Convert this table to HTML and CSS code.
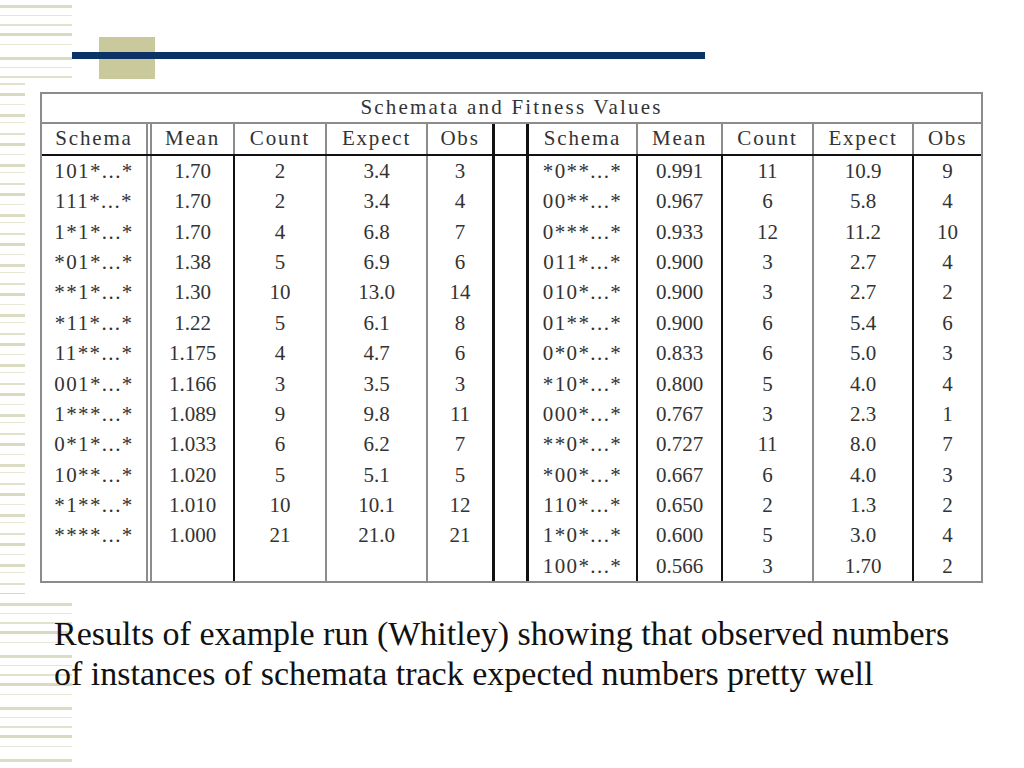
FILE: index.html
```html
<!DOCTYPE html>
<html>
<head>
<meta charset="utf-8">
<link rel="stylesheet" href="styles.css">
</head>
<body>
<div class="deco"></div>
<div class="tbl">
  <div class="title">Schemata and Fitness Values</div>
  <div class="row head">
    <div>Schema</div><div>Mean</div><div>Count</div><div>Expect</div><div>Obs</div><div></div>
    <div>Schema</div><div>Mean</div><div>Count</div><div>Expect</div><div>Obs</div>
  </div>
  <div class="body">
    <div class="row"><div>101*...*</div><div>1.70</div><div>2</div><div>3.4</div><div>3</div><div></div><div>*0**...*</div><div>0.991</div><div>11</div><div>10.9</div><div>9</div></div>
    <div class="row"><div>111*...*</div><div>1.70</div><div>2</div><div>3.4</div><div>4</div><div></div><div>00**...*</div><div>0.967</div><div>6</div><div>5.8</div><div>4</div></div>
    <div class="row"><div>1*1*...*</div><div>1.70</div><div>4</div><div>6.8</div><div>7</div><div></div><div>0***...*</div><div>0.933</div><div>12</div><div>11.2</div><div>10</div></div>
    <div class="row"><div>*01*...*</div><div>1.38</div><div>5</div><div>6.9</div><div>6</div><div></div><div>011*...*</div><div>0.900</div><div>3</div><div>2.7</div><div>4</div></div>
    <div class="row"><div>**1*...*</div><div>1.30</div><div>10</div><div>13.0</div><div>14</div><div></div><div>010*...*</div><div>0.900</div><div>3</div><div>2.7</div><div>2</div></div>
    <div class="row"><div>*11*...*</div><div>1.22</div><div>5</div><div>6.1</div><div>8</div><div></div><div>01**...*</div><div>0.900</div><div>6</div><div>5.4</div><div>6</div></div>
    <div class="row"><div>11**...*</div><div>1.175</div><div>4</div><div>4.7</div><div>6</div><div></div><div>0*0*...*</div><div>0.833</div><div>6</div><div>5.0</div><div>3</div></div>
    <div class="row"><div>001*...*</div><div>1.166</div><div>3</div><div>3.5</div><div>3</div><div></div><div>*10*...*</div><div>0.800</div><div>5</div><div>4.0</div><div>4</div></div>
    <div class="row"><div>1***...*</div><div>1.089</div><div>9</div><div>9.8</div><div>11</div><div></div><div>000*...*</div><div>0.767</div><div>3</div><div>2.3</div><div>1</div></div>
    <div class="row"><div>0*1*...*</div><div>1.033</div><div>6</div><div>6.2</div><div>7</div><div></div><div>**0*...*</div><div>0.727</div><div>11</div><div>8.0</div><div>7</div></div>
    <div class="row"><div>10**...*</div><div>1.020</div><div>5</div><div>5.1</div><div>5</div><div></div><div>*00*...*</div><div>0.667</div><div>6</div><div>4.0</div><div>3</div></div>
    <div class="row"><div>*1**...*</div><div>1.010</div><div>10</div><div>10.1</div><div>12</div><div></div><div>110*...*</div><div>0.650</div><div>2</div><div>1.3</div><div>2</div></div>
    <div class="row"><div>****...*</div><div>1.000</div><div>21</div><div>21.0</div><div>21</div><div></div><div>1*0*...*</div><div>0.600</div><div>5</div><div>3.0</div><div>4</div></div>
    <div class="row"><div></div><div></div><div></div><div></div><div></div><div></div><div>100*...*</div><div>0.566</div><div>3</div><div>1.70</div><div>2</div></div>
  </div>
</div>
<p class="caption">Results of example run (Whitley) showing that observed numbers of instances of schemata track expected numbers pretty well</p>
</body>
</html>
```
FILE: styles.css
```css
html, body {
  margin: 0;
  padding: 0;
  background-color: #fff;
}
body {
  width: 1024px;
  height: 768px;
  overflow: hidden;
  background-image:
    repeating-linear-gradient(to bottom, transparent 0 5px, #dcdcc4 5px 8px, transparent 8px 15px, #e6e6d4 15px 16px, transparent 16px 24px, #e2e2cc 24px 26px, transparent 26px 33px, #dadac0 33px 36px, transparent 36px 44px, #e8e8d8 44px 45px, transparent 45px 52px),
    repeating-linear-gradient(to bottom, transparent 0 3px, #e2e2cc 3px 5px, transparent 5px 13px, #dadac0 13px 16px, transparent 16px 24px, #e8e8d8 24px 25px, transparent 25px 34px, #dcdcc4 34px 37px, transparent 37px 42px, #e6e6d4 42px 43px, transparent 43px 50px),
    repeating-linear-gradient(to bottom, transparent 0 5px, #dcdcc4 5px 8px, transparent 8px 15px, #e6e6d4 15px 16px, transparent 16px 24px, #e2e2cc 24px 26px, transparent 26px 33px, #dadac0 33px 36px, transparent 36px 44px, #e8e8d8 44px 45px, transparent 45px 52px);
  background-repeat: no-repeat;
  background-position: 0 0, 0 80px, 0 598px;
  background-size: 72px 79px, 25px 514px, 72px 170px;
  font-family: "Liberation Serif", "Times New Roman", serif;
}
.deco {
  margin: 37px 0 0 72px;
  width: 633px;
  height: 42px;
  background-image:
    linear-gradient(#0b3366, #0b3366),
    linear-gradient(#c9c99b, #c9c99b);
  background-repeat: no-repeat;
  background-position: 0 15px, 27px 0;
  background-size: 633px 7px, 56px 42px;
}
.tbl {
  margin: 13px 0 0 40px;
  width: 943px;
  box-sizing: border-box;
  border: 2px solid #8c8c8c;
  color: #333;
  font-size: 21px;
}
.title {
  height: 30px;
  box-sizing: border-box;
  border-bottom: 2px solid #8c8c8c;
  text-align: center;
  line-height: 27px;
  letter-spacing: 2.2px;
}
.row {
  display: grid;
  grid-template-columns: 104px 87px 92px 101px 66px 34px 110px 85px 91px 100px 69px;
  height: 30.36px;
  line-height: 30px;
  text-align: center;
}
.row > div {
  box-sizing: border-box;
  white-space: nowrap;
}
.row > :nth-child(2) { border-left: 6px double #8c8c8c; }
.row > :nth-child(3) { border-left: 2px solid #111; }
.row > :nth-child(4) { border-left: 2px solid #8c8c8c; }
.row > :nth-child(5) { border-left: 2px solid #8c8c8c; }
.row > :nth-child(6) { border-left: 3px solid #111; }
.row > :nth-child(7) { border-left: 3px solid #111; }
.row > :nth-child(8) { border-left: 2px solid #111; }
.row > :nth-child(9) { border-left: 2px solid #111; }
.row > :nth-child(10) { border-left: 2px solid #8c8c8c; }
.row > :nth-child(11) { border-left: 2px solid #111; }
.row > :nth-child(1),
.row > :nth-child(7) { letter-spacing: 1.4px; }
.head {
  height: 30px;
  line-height: 28px;
  border-bottom: 2px solid #111;
  letter-spacing: 1.8px;
}
.head > div { letter-spacing: 1.8px; }
.head > :nth-child(1), .head > :nth-child(7) { letter-spacing: 1.8px; }
.head > :nth-child(3),
.head > :nth-child(8),
.head > :nth-child(9),
.head > :nth-child(11) { border-left-color: #8c8c8c; }
.caption {
  margin: 31px 60px 0 54px;
  font-size: 34px;
  line-height: 40px;
  color: #111;
}
```
